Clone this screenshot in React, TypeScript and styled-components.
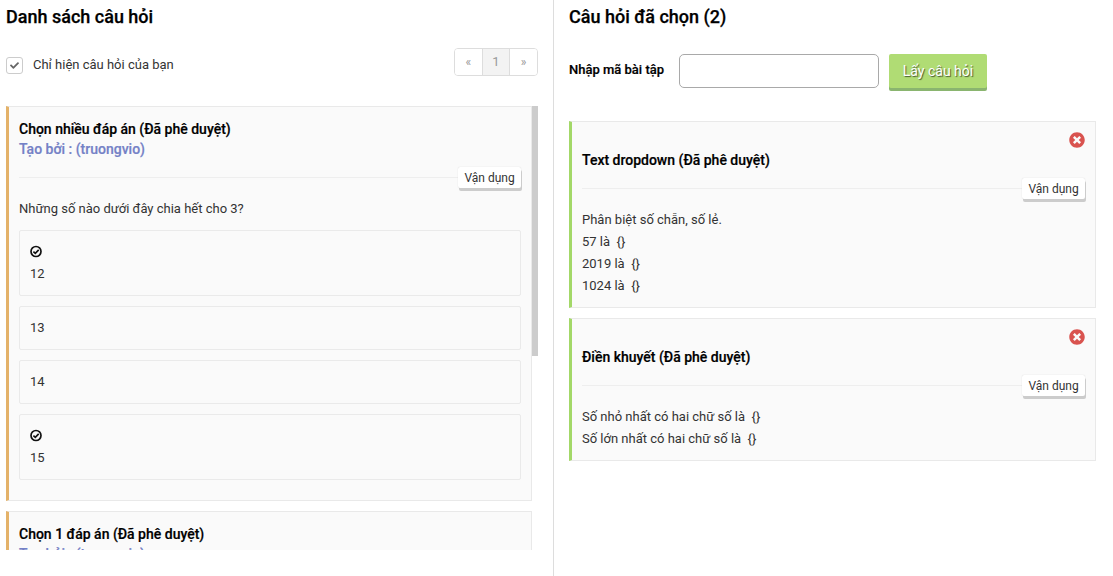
import React from "react";
import styled, { createGlobalStyle } from "styled-components";
import { FaCheck, FaTimesCircle } from "react-icons/fa";

const GlobalStyle = createGlobalStyle`
  html, body {
    margin: 0;
    padding: 0;
    background: #fff;
    overflow: hidden;
  }
  * {
    box-sizing: border-box;
  }
  body {
    font-family: Roboto, "Liberation Sans", sans-serif;
    font-size: 13px;
    line-height: 22px;
    color: #333;
  }
`;

const Page = styled.div`
  display: grid;
  grid-template-columns: 554px 1fr;
  height: 576px;
`;

const LeftPanel = styled.section`
  border-right: 1px solid #ddd;
  padding: 7px 15px 0 6px;
`;

const RightPanel = styled.section`
  padding: 7px 17px 0 15px;
`;

const Heading = styled.h2`
  margin: 0;
  font-size: 18px;
  font-weight: 500;
  line-height: 20px;
  color: #000;
  -webkit-text-stroke: 0.25px #000;
`;

const FilterRow = styled.div`
  display: flex;
  justify-content: space-between;
  align-items: flex-start;
  height: 58px;
  margin-top: 21px;
`;

const CheckLabel = styled.label`
  display: flex;
  align-items: center;
  gap: 10px;
  margin-top: 6px;
  height: 22px;
`;

const CheckBox = styled.span`
  display: flex;
  align-items: center;
  justify-content: center;
  width: 17px;
  height: 17px;
  border: 1px solid #ccc;
  border-radius: 3px;
  color: #666;
  font-size: 9px;
`;

const Pager = styled.div`
  display: flex;
  width: 84px;
  height: 28px;
  border: 1px solid #ddd;
  border-radius: 4px;
  overflow: hidden;
`;

const PagerCell = styled.span<{ $active?: boolean }>`
  display: flex;
  flex: 1;
  align-items: center;
  justify-content: center;
  color: #999;
  font-size: ${(p) => (p.$active ? "13px" : "12px")};
  background: ${(p) => (p.$active ? "#f3f3f3" : "#fff")};
  & + & {
    border-left: 1px solid #ddd;
  }
`;

const ListFrame = styled.div`
  position: relative;
  display: flex;
  flex-direction: column;
  gap: 10px;
  height: 444px;
  padding-right: 6px;
  overflow: hidden;
`;

const ScrollThumb = styled.div`
  position: absolute;
  top: 0;
  right: 0;
  width: 6px;
  height: 250px;
  background: #ccc;
`;

const Card = styled.article<{ $accent: string }>`
  position: relative;
  flex-shrink: 0;
  padding: 12px 10px 10px 10px;
  background: #fafafa;
  border: 1px solid #e9e9e9;
  border-left: 3px solid ${(p) => p.$accent};
`;

const CloseRow = styled.div`
  display: flex;
  justify-content: flex-end;
  height: 17px;
  margin-top: -2px;
  margin-bottom: 1px;
  color: #d9534f;
  font-size: 16px;
`;

const CardTitle = styled.div`
  font-size: 14px;
  font-weight: 500;
  line-height: 20px;
  color: #000;
  -webkit-text-stroke: 0.2px #000;
`;

const Author = styled.div`
  font-size: 14px;
  font-weight: 500;
  line-height: 20px;
  color: #7481c6;
  -webkit-text-stroke: 0.2px #7481c6;
`;

const DividerRow = styled.div`
  position: relative;
  height: 1px;
  margin: 18px 0 20px;
  background: #eee;
`;

const ApplyButton = styled.button`
  position: absolute;
  right: 0;
  top: -10px;
  height: 21px;
  width: 63px;
  padding: 2px 0 0;
  border: none;
  border-radius: 2px;
  background: #fff;
  font: inherit;
  font-size: 12px;
  line-height: 19px;
  color: #333;
  box-shadow: 0 0 1px #ccc, 1px 3px 0 #ccc;
`;

const Line = styled.div`
  line-height: 22px;
`;

const Options = styled.div`
  display: flex;
  flex-direction: column;
  gap: 10px;
  margin: 10px 0;
`;

const Option = styled.div`
  padding: 10px;
  border: 1px solid #eaeaea;
  border-radius: 2px;
`;

const OptionMark = styled.div`
  display: flex;
  align-items: center;
  height: 22px;
  padding-bottom: 2px;
`;

const CodeForm = styled.div`
  display: flex;
  align-items: flex-start;
  height: 67px;
  margin-top: 27px;
`;

const CodeLabel = styled.label`
  width: 110px;
  margin-top: 5px;
  font-weight: 500;
  color: #000;
  -webkit-text-stroke: 0.2px #000;
`;

const CodeInput = styled.input`
  width: 200px;
  height: 34px;
  padding: 0 8px;
  border: 1px solid #a9a9a9;
  border-radius: 5px;
  background: #fff;
  outline: none;
`;

const FetchButton = styled.button`
  width: 98px;
  height: 34px;
  margin-left: 10px;
  padding: 0;
  border: none;
  border-radius: 2px;
  background: #b0dc74;
  box-shadow: 0 3px 0 #8ab56f;
  color: #fff;
  font: inherit;
  font-size: 14px;
  text-shadow: 1px 1px 1px rgba(0, 0, 0, 0.6);
`;

const SelectedList = styled.div`
  display: flex;
  flex-direction: column;
  gap: 10px;
`;

const ORANGE = "#e4b269";
const GREEN = "#a3d868";

const CheckedMark = () => (
  <svg width="13" height="13" viewBox="0 0 13 13" fill="none" stroke="#111">
    <circle cx="6" cy="6.5" r="5" strokeWidth="1.7" />
    <path d="M3.4 6.6 L5.3 8.3 L8.7 4.9" strokeWidth="1.7" />
  </svg>
);

const renderOption = (label: string, marked?: boolean) => (
  <Option key={label}>
    {marked && (
      <OptionMark>
        <CheckedMark />
      </OptionMark>
    )}
    {label}
  </Option>
);

const App: React.FC = () => {
  return (
    <>
      <GlobalStyle />
      <Page>
        <LeftPanel>
          <Heading>Danh sách câu hỏi</Heading>
          <FilterRow>
            <CheckLabel>
              <CheckBox>
                <FaCheck />
              </CheckBox>
              Chỉ hiện câu hỏi của bạn
            </CheckLabel>
            <Pager>
              <PagerCell>«</PagerCell>
              <PagerCell $active>1</PagerCell>
              <PagerCell>»</PagerCell>
            </Pager>
          </FilterRow>
          <ListFrame>
            <Card $accent={ORANGE}>
              <CardTitle>Chọn nhiều đáp án (Đã phê duyệt)</CardTitle>
              <Author>Tạo bởi : (truongvio)</Author>
              <DividerRow>
                <ApplyButton>Vận dụng</ApplyButton>
              </DividerRow>
              <Line>Những số nào dưới đây chia hết cho 3?</Line>
              <Options>
                {renderOption("12", true)}
                {renderOption("13")}
                {renderOption("14")}
                {renderOption("15", true)}
              </Options>
            </Card>
            <Card $accent={ORANGE}>
              <CardTitle>Chọn 1 đáp án (Đã phê duyệt)</CardTitle>
              <Author>Tạo bởi : (truongvio)</Author>
            </Card>
            <ScrollThumb />
          </ListFrame>
        </LeftPanel>
        <RightPanel>
          <Heading>Câu hỏi đã chọn (2)</Heading>
          <CodeForm>
            <CodeLabel>Nhập mã bài tập</CodeLabel>
            <CodeInput type="text" />
            <FetchButton>Lấy câu hỏi</FetchButton>
          </CodeForm>
          <SelectedList>
            <Card $accent={GREEN}>
              <CloseRow>
                <FaTimesCircle />
              </CloseRow>
              <CardTitle>Text dropdown (Đã phê duyệt)</CardTitle>
              <DividerRow>
                <ApplyButton>Vận dụng</ApplyButton>
              </DividerRow>
              <Line>Phân biệt số chẵn, số lẻ.</Line>
              <Line>57 là &nbsp;{"{}"}</Line>
              <Line>2019 là &nbsp;{"{}"}</Line>
              <Line>1024 là &nbsp;{"{}"}</Line>
            </Card>
            <Card $accent={GREEN}>
              <CloseRow>
                <FaTimesCircle />
              </CloseRow>
              <CardTitle>Điền khuyết (Đã phê duyệt)</CardTitle>
              <DividerRow>
                <ApplyButton>Vận dụng</ApplyButton>
              </DividerRow>
              <Line>Số nhỏ nhất có hai chữ số là &nbsp;{"{}"}</Line>
              <Line>Số lớn nhất có hai chữ số là &nbsp;{"{}"}</Line>
            </Card>
          </SelectedList>
        </RightPanel>
      </Page>
    </>
  );
};

export default App;
